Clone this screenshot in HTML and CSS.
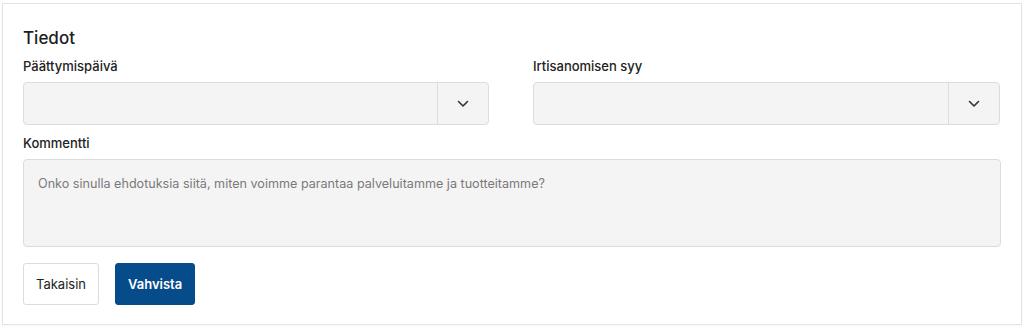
FILE: index.html
```html
<!DOCTYPE html>
<html lang="fi">

  <head>
    <meta charset="UTF-8">
    <meta name="viewport" content="width=device-width, initial-scale=1.0">
    <title>Tiedot</title>
    <link rel="stylesheet" href="styles.css">
  </head>

  <body>
    <div class="card">
      <h2 class="card-title">Tiedot</h2>
      <div class="fields">
        <div class="field">
          <label class="field-label">Päättymispäivä</label>
          <div class="select">
            <div class="select-value"></div>
            <div class="select-toggle">
              <svg width="12" height="8" viewBox="0 0 12 8"><path d="M1.5 1.5 L6 6 L10.5 1.5" fill="none" stroke="#333" stroke-width="1.6" stroke-linecap="round" stroke-linejoin="round"/></svg>
            </div>
          </div>
        </div>
        <div class="field">
          <label class="field-label">Irtisanomisen syy</label>
          <div class="select">
            <div class="select-value"></div>
            <div class="select-toggle">
              <svg width="12" height="8" viewBox="0 0 12 8"><path d="M1.5 1.5 L6 6 L10.5 1.5" fill="none" stroke="#333" stroke-width="1.6" stroke-linecap="round" stroke-linejoin="round"/></svg>
            </div>
          </div>
        </div>
      </div>
      <div class="field field-comment">
        <label class="field-label">Kommentti</label>
        <textarea class="comment" placeholder="Onko sinulla ehdotuksia siitä, miten voimme parantaa palveluitamme ja tuotteitamme?"></textarea>
      </div>
      <div class="actions">
        <button class="btn btn-secondary">Takaisin</button>
        <button class="btn btn-primary">Vahvista</button>
      </div>
    </div>
  </body>

</html>
```

FILE: styles.css
```css
body {
  margin: 0;
  padding: 3px 2px 2px 2px;
  background-color: #fff;
  font-family: Inter, "Noto Sans", sans-serif;
  color: #222;
}

.card {
  border: 1px solid #e4e4e4;
  box-shadow: 0 1px 2px rgba(0, 0, 0, 0.04);
  padding: 22px 20px 19px 20px;
  background-color: #fff;
}

.card-title {
  margin: 0 0 7px 0;
  font-size: 17px;
  line-height: 24px;
  font-weight: 500;
  color: #1e1e1e;
}

.fields {
  display: grid;
  grid-template-columns: 466px 467px;
  column-gap: 44px;
}

.field {
  display: flex;
  flex-direction: column;
}

.field-label {
  font-size: 13px;
  line-height: 18px;
  font-weight: 500;
  color: #222;
  margin-bottom: 7px;
}

.select {
  display: flex;
  height: 43px;
  box-sizing: border-box;
  border: 1px solid #dcdcdc;
  border-radius: 4px;
  background-color: #f4f4f4;
}

.select-value {
  flex: 1;
}

.select-toggle {
  width: 50px;
  border-left: 1px solid #dcdcdc;
  display: flex;
  justify-content: center;
  align-items: center;
}

.field-comment {
  margin-top: 9px;
}

.comment {
  height: 88px;
  box-sizing: border-box;
  border: 1px solid #dcdcdc;
  border-radius: 4px;
  background-color: #f4f4f4;
  padding: 16px 14px;
  font-family: Inter, "Noto Sans", sans-serif;
  font-size: 12.6px;
  resize: none;
}

.comment::placeholder {
  color: #7a7a7a;
}

.actions {
  display: flex;
  gap: 16px;
  margin-top: 16px;
}

.btn {
  height: 42px;
  padding: 0 12px;
  border-radius: 3px;
  font-family: Inter, "Noto Sans", sans-serif;
  font-size: 13px;
}

.btn-secondary {
  border: 1px solid #dcdcdc;
  background-color: #fff;
  color: #222;
}

.btn-primary {
  border: 1px solid #064b8a;
  background-color: #064b8a;
  color: #fff;
  font-weight: 600;
  padding: 0 12px;
}
```
